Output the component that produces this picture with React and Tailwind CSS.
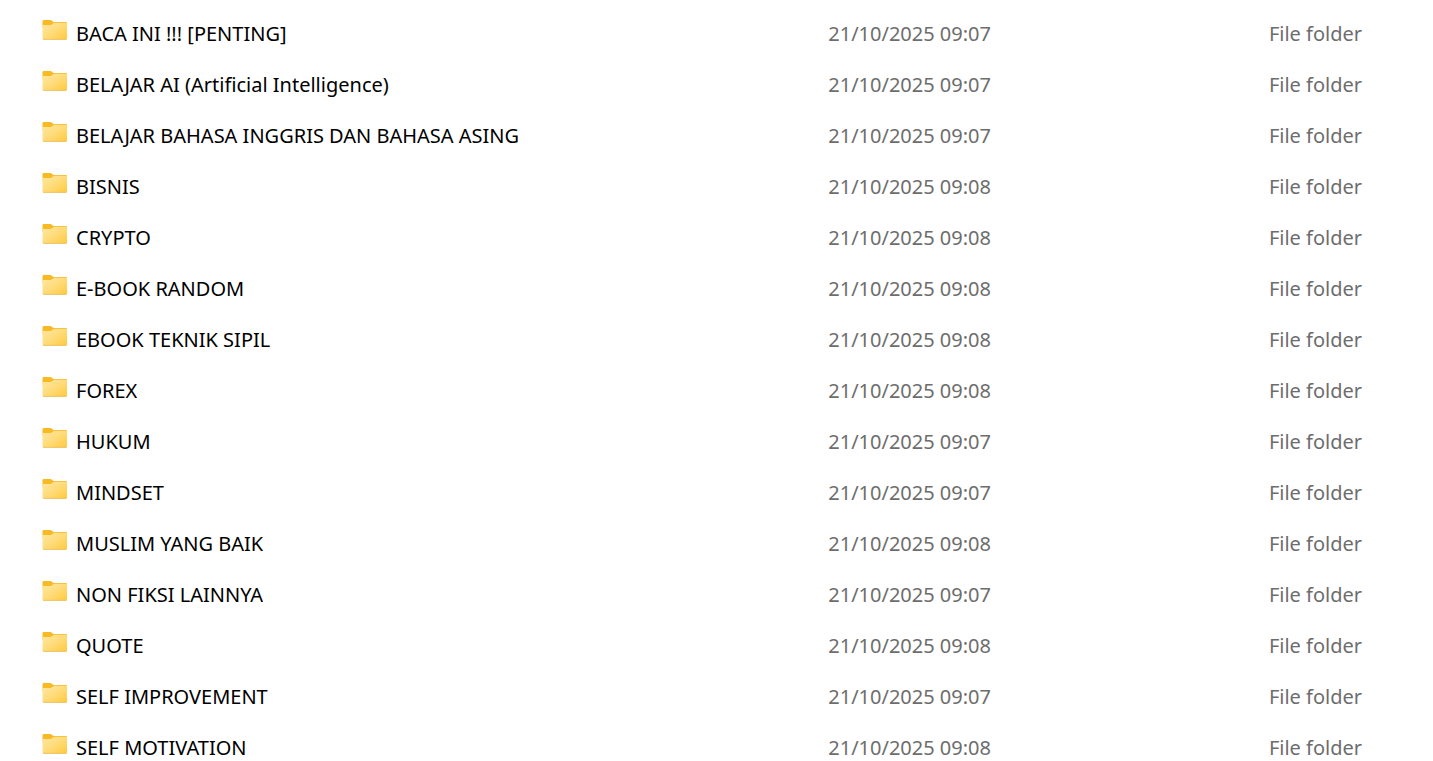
import React from "react";

const folders = [
  { name: "BACA INI !!! [PENTING]", modified: "21/10/2025 09:07" },
  { name: "BELAJAR AI (Artificial Intelligence)", modified: "21/10/2025 09:07" },
  { name: "BELAJAR BAHASA INGGRIS DAN BAHASA ASING", modified: "21/10/2025 09:07" },
  { name: "BISNIS", modified: "21/10/2025 09:08" },
  { name: "CRYPTO", modified: "21/10/2025 09:08" },
  { name: "E-BOOK RANDOM", modified: "21/10/2025 09:08" },
  { name: "EBOOK TEKNIK SIPIL", modified: "21/10/2025 09:08" },
  { name: "FOREX", modified: "21/10/2025 09:08" },
  { name: "HUKUM", modified: "21/10/2025 09:07" },
  { name: "MINDSET", modified: "21/10/2025 09:07" },
  { name: "MUSLIM YANG BAIK", modified: "21/10/2025 09:08" },
  { name: "NON FIKSI LAINNYA", modified: "21/10/2025 09:07" },
  { name: "QUOTE", modified: "21/10/2025 09:08" },
  { name: "SELF IMPROVEMENT", modified: "21/10/2025 09:07" },
  { name: "SELF MOTIVATION", modified: "21/10/2025 09:08" },
];

function FolderIcon() {
  return (
    <svg
      width="26"
      height="20"
      viewBox="0 0 26 20"
      className="mb-2 shrink-0"
      aria-hidden="true"
    >
      <defs>
        <linearGradient id="folderFront" x1="0" y1="0" x2="1" y2="1">
          <stop offset="0" stopColor="#ffe8a4" />
          <stop offset="0.5" stopColor="#ffdb79" />
          <stop offset="1" stopColor="#ffc93c" />
        </linearGradient>
      </defs>
      <path
        d="M0.5 1.3Q0.5 0 1.8 0H8.2Q9.2 0 9.9 0.7L11.4 2H24Q25 2 25 3V8H0.5Z"
        fill="#f7b924"
      />
      <path
        d="M0.5 5H8.4Q9.3 5 10 4.3L11 3.4Q11.6 2.8 12.4 2.8H24Q25 2.8 25 3.8V18.5Q25 19.5 24 19.5H1.5Q0.5 19.5 0.5 18.5Z"
        fill="url(#folderFront)"
      />
      <path d="M1 19.4H24.5" stroke="#eab54a" strokeWidth="0.7" />
    </svg>
  );
}

export default function App() {
  return (
    <main className="h-screen overflow-hidden bg-white pt-2 font-['Noto_Sans',sans-serif]">
      <table className="w-full table-fixed border-collapse text-left text-[20px] leading-7">
        <colgroup>
          <col className="w-[57.8%]" />
          <col className="w-[30.75%]" />
          <col />
        </colgroup>
        <tbody>
          {folders.map((folder) => (
            <tr key={folder.name} className="h-[51px]">
              <td className="p-0 pl-[42px]">
                <div className="flex items-center gap-2 text-black">
                  <FolderIcon />
                  <span className="truncate">{folder.name}</span>
                </div>
              </td>
              <td className="p-0 text-[#6d6d6d]">{folder.modified}</td>
              <td className="p-0 text-[#6d6d6d]">File folder</td>
            </tr>
          ))}
        </tbody>
      </table>
    </main>
  );
}
